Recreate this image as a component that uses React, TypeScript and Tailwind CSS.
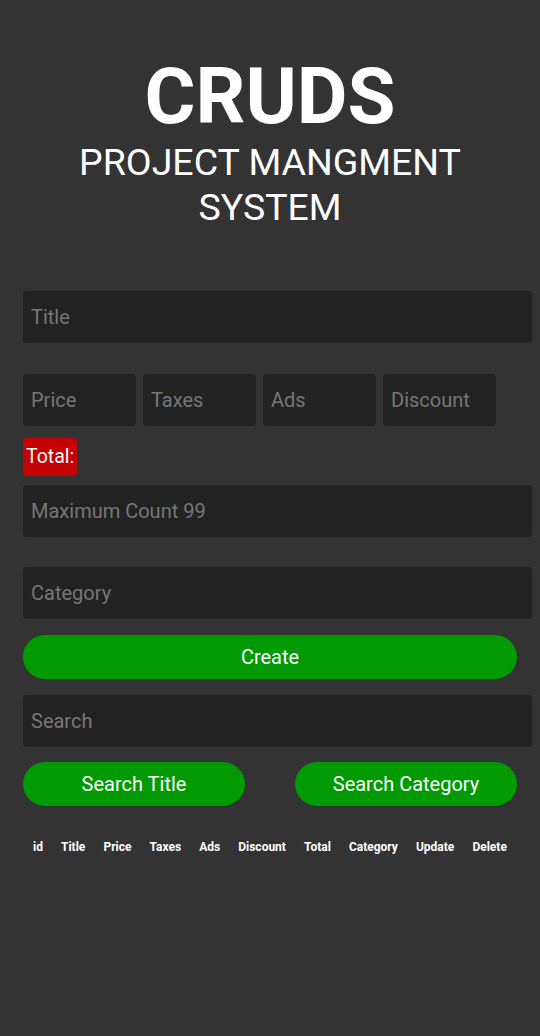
import React from "react";

const inputCls =
  "block h-[52px] rounded-[4px] bg-[#222222] px-[8px] text-[20px] text-white placeholder:text-[#777777] outline-none";

export default function App() {
  const cols = ["id", "Title", "Price", "Taxes", "Ads", "Discount", "Total", "Category", "Update", "Delete"];
  return (
    <div className="min-h-[1036px] w-[540px] bg-[#333333] font-['Roboto',sans-serif] text-white">
      <header className="pt-[58px] text-center">
        <h1 className="text-[78px] font-bold leading-[78px]">CRUDS</h1>
        <p className="mt-[4px] text-[37.5px] leading-[45px]">PROJECT MANGMENT<br />SYSTEM</p>
      </header>

      <div className="mt-[61px] pl-[23px] pr-[8px]">
        <input className={`${inputCls} w-[509px]`} placeholder="Title" />
        <div className="mt-[31px] flex gap-[7px]">
          <input className={`${inputCls} w-[113px]`} placeholder="Price" />
          <input className={`${inputCls} w-[113px]`} placeholder="Taxes" />
          <input className={`${inputCls} w-[113px]`} placeholder="Ads" />
          <input className={`${inputCls} w-[113px]`} placeholder="Discount" />
        </div>
        <div className="mt-[12px] flex">
          <small className="rounded-[4px] bg-[#c40000] px-[3px] py-[4px] text-[19.5px] leading-[30px]">Total:</small>
        </div>
        <input className={`${inputCls} mt-[9px] w-[509px]`} placeholder="Maximum Count 99" />
        <input className={`${inputCls} mt-[30px] w-[509px]`} placeholder="Category" />
        <button className="mt-[16px] block h-[44px] w-[494px] rounded-full bg-[#029a02] text-[20px] text-white">
          Create
        </button>
        <input className={`${inputCls} mt-[16px] w-[509px]`} placeholder="Search" />
        <div className="mt-[15px] flex w-[494px] justify-between">
          <button className="h-[44px] w-[222px] rounded-full bg-[#029a02] text-[20px] text-white">Search Title</button>
          <button className="h-[44px] w-[222px] rounded-full bg-[#029a02] text-[20px] text-white">Search Category</button>
        </div>
        <div className="mt-[33px] flex w-[494px] justify-between px-[10px] text-[12px] font-bold leading-[16px]">
          {cols.map((c) => (
            <span key={c}>{c}</span>
          ))}
        </div>
      </div>
    </div>
  );
}
